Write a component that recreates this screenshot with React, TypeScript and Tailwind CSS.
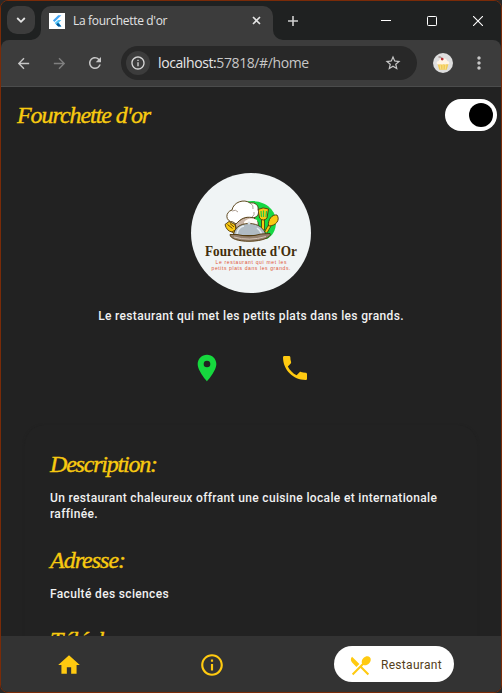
import React from "react";
import {
  MdArrowBack,
  MdArrowForward,
  MdRefresh,
  MdInfoOutline,
  MdStarBorder,
  MdMoreVert,
  MdLocationOn,
  MdPhone,
  MdHome,
  MdRestaurantMenu,
} from "react-icons/md";

function FlutterIcon() {
  return (
    <svg width="16" height="16" viewBox="0 0 16 16" className="block shrink-0">
      <rect width="16" height="16" fill="#fff" />
      <path d="M9.2 2.2h3.2L5.5 9.1 3.9 7.5z" fill="#42a5f5" />
      <path d="M9.2 7.1h3.2L9.9 9.6 12.4 13.4H9.2L5.6 9.9z" fill="#54c5f8" />
      <path d="M7.2 11.5 9 9.8l3.4 3.6H9.2z" fill="#01579b" />
    </svg>
  );
}

function TitleBar() {
  return (
    <div className="flex h-[39px] shrink-0 bg-[#1f2121]">
      <div className="w-[40px] shrink-0 pl-[6px] pt-[5px]">
        <div className="flex h-7 w-7 items-center justify-center rounded-[10px] bg-[#3c3c3c]">
          <svg width="10" height="8" viewBox="0 0 10 8" fill="none" stroke="#e3e3e3" strokeWidth="1.8">
            <path d="M1.2 2 5 5.8 8.8 2" />
          </svg>
        </div>
      </div>
      <div className="relative mt-[5px] flex h-[34px] w-[232px] shrink-0 items-center rounded-t-[10px] bg-[#3c3c3c] pb-[5px] pl-[8px]">
        <svg className="absolute -left-[10px] bottom-0" width="10" height="10">
          <path d="M10 0v10H0A10 10 0 0 0 10 0z" fill="#3c3c3c" />
        </svg>
        <svg className="absolute -right-[10px] bottom-0" width="10" height="10">
          <path d="M0 0v10h10A10 10 0 0 1 0 0z" fill="#3c3c3c" />
        </svg>
        <FlutterIcon />
        <span className="ml-[8px] whitespace-nowrap font-['Open_Sans',sans-serif] text-[12px] leading-4 tracking-[-0.32px] text-[#e3e3e3]">
          La fourchette d'or
        </span>
        <svg className="ml-auto mr-[12px]" width="9" height="9" viewBox="0 0 9 9" stroke="#e3e3e3" strokeWidth="1.6">
          <path d="M1 1l7 7M8 1 1 8" />
        </svg>
      </div>
      <div className="flex flex-1 items-center pl-[15px] pr-[18px]">
        <svg width="10" height="10" viewBox="0 0 10 10" stroke="#d0d0d0" strokeWidth="1.6">
          <path d="M5 0v10M0 5h10" />
        </svg>
        <svg className="ml-auto" width="10" height="10" viewBox="0 0 10 10" stroke="#fff" shapeRendering="crispEdges">
          <path d="M0 4.5h10" />
        </svg>
        <svg className="ml-[36px]" width="10" height="10" viewBox="0 0 10 10" fill="none" stroke="#fff">
          <rect x=".5" y=".5" width="9" height="9" rx=".8" />
        </svg>
        <svg className="ml-[36px]" width="10" height="10" viewBox="0 0 10 10" stroke="#fff" strokeWidth="1.1">
          <path d="M0 0l10 10M10 0 0 10" />
        </svg>
      </div>
    </div>
  );
}

function Cupcake() {
  return (
    <svg width="20" height="20" viewBox="0 0 20 20" className="block">
      <circle cx="10" cy="10" r="10" fill="#dedede" />
      <path d="M4.5 10.5h11l-1.7 6.2H6.2z" fill="#f1ca55" />
      <path d="M7 11l.8 5.5M10 11v5.5M13 11l-.8 5.5" stroke="#fbe69a" strokeWidth=".8" />
      <path d="M3.8 10.8c-.7-1.9.9-3 2-2.8.5-2 2.3-2.9 4.4-2.7 2.3 0 3.7 1 4 2.8 1.6 0 2.5 1.2 2 2.7-1 1.1-2.6.3-3 .1-1 .9-2.3.7-3 .1-1 .9-2.4.6-3.1 0-1 .9-2.8.6-3.3-.2z" fill="#fff4e5" />
      <circle cx="9.2" cy="6.1" r="1.4" fill="#b52e31" />
      <path d="M8.6 4.8Q7.5 3.6 5.5 4" stroke="#663c38" strokeWidth=".7" fill="none" />
    </svg>
  );
}

function Toolbar() {
  return (
    <div className="bg-[#1f2121]">
      <div className="flex h-[47px] items-center rounded-t-[8px] border-b border-[#4b4c4c] bg-[#3c3c3c] pl-[14px] pr-[12px]">
        <MdArrowBack size={17} color="#c7c7c7" />
        <MdArrowForward size={17} color="#7f7f7f" className="ml-[19px]" />
        <MdRefresh size={18} color="#c7c7c7" className="ml-[18px]" />
        <div className="ml-[17px] flex h-[34px] w-[296px] items-center rounded-full bg-[#282828] pl-[5px] pr-[15px]">
          <div className="flex h-6 w-6 items-center justify-center rounded-full bg-[#3c3c3c]">
            <MdInfoOutline size={16} color="#d6d6d6" />
          </div>
          <span className="ml-[8px] whitespace-nowrap font-['Open_Sans',sans-serif] text-[14px] leading-5 tracking-[-0.4px] text-[#c7c7c7]">
            <span className="text-[#e6e6e6]">localhost:</span>57818/#/home
          </span>
          <MdStarBorder size={18} color="#c7c7c7" className="ml-auto" />
        </div>
        <div className="ml-[16px]">
          <Cupcake />
        </div>
        <MdMoreVert size={20} color="#c7c7c7" className="ml-auto" />
      </div>
    </div>
  );
}

function RestaurantLogo() {
  return (
    <svg width="120" height="120" viewBox="0 0 120 120" className="block">
      <circle cx="60" cy="60" r="60" fill="#f0f4f5" />
      <path d="M54 29c17-4 31 6 31 20 0 9-4 14-9 17H60z" fill="#16d844" />
      <g stroke="#4e3609" strokeWidth=".9">
        <path d="M41 57l8 7" strokeWidth="3.500" />
        <path d="M41 57l8 7" stroke="#f9c913" strokeWidth="1.800" />
        <path d="M34 51.500l4-3 6 3 1 5-4 2.500q-5.500-1-7-7.500z" fill="#f9c913" />
        <path d="M36.500 51.500l5 4M39 50.500l4 3.500" />
        <path d="M72 46v11" strokeWidth="3.600" />
        <path d="M72 46v11" stroke="#f9c913" strokeWidth="2" />
        <path d="M67 36.500q5-3 10.500-.5l-1.500 9q-3.500 4-7.500 0z" fill="#f9c913" />
        <path d="M70 38l.5 6M72.500 37.500v6.500M75.500 38l-.5 6" stroke="#24c947" strokeWidth="1.200" />
        <path d="M79 52l-4 7" strokeWidth="3.500" />
        <path d="M79 52l-4 7" stroke="#f9c913" strokeWidth="2" />
        <path d="M77.500 53c-1-6 3.500-12 8.500-11 3.500 5-1 11-8.500 11z" fill="#f9c913" />
        <path d="M44 50q8-6 17-7.500l6 7v8l-20 6z" fill="#c9b5a6" />
        <path d="M53 49q5-6 13-2l1 7-14 4z" fill="#fffaf5" stroke="none" />
        <path d="M42 49c-8-.5-8-10-1-12 1.500-8 12-11.500 18-7 5-1 9 2.500 8 6.500 2 5-2 9-6 8-7-1-11 1-16 6.500z" fill="#fff" />
        <path d="M41 38q4-2 6 1M59 30q4 2 3 6M61 44q3-2 2-5" fill="none" stroke="#897665" strokeWidth=".7" />
        <path d="M42.500 62.500c.5-7 6-12 15.500-12s15.500 5 17 12z" fill="#b0bbc3" />
        <circle cx="58" cy="50" r="1.500" fill="#d9dfe3" stroke="none" />
        <path d="M46 61q1-7 7-8M66 55q4 3 4.500 6" fill="none" stroke="#e6edf1" strokeWidth="1.500" />
        <path d="M39 61.500h7q12 3 24-.5l9-.5c2 3-6 7.500-20 7.800-12 .2-20-2.800-20-6.800z" fill="#94806d" />
        <path d="M43 64q15 4.500 32-.5" fill="none" stroke="#d8cabe" />
      </g>
      <text x="14" y="82.500" textLength="92" lengthAdjust="spacingAndGlyphs" fill="#422d0b" className="font-['Liberation_Serif',serif] text-[14px] font-bold">
        Fourchette d'Or
      </text>
      <g fill="#e05538" className="font-['Liberation_Sans',sans-serif] text-[5px]">
        <text x="24.500" y="90.800" textLength="71" lengthAdjust="spacing">Le restaurant qui met les</text>
        <text x="20.500" y="97" textLength="79" lengthAdjust="spacing">petits plats dans les grands.</text>
      </g>
    </svg>
  );
}

function Section({ title, children, titleClass }: { title: string; children?: React.ReactNode; titleClass: string }) {
  return (
    <section className="mb-[21px]">
      <h2 className={"mb-[8px] whitespace-nowrap font-['Liberation_Serif',serif] text-[24px] italic leading-[35px] text-[#f8ca10] [-webkit-text-stroke:0.4px_#f8ca10] " + titleClass}>
        {title}
      </h2>
      <p className="text-[12px] font-medium leading-4 tracking-[0.345px] text-[#f1f1f1]">{children}</p>
    </section>
  );
}

export default function App() {
  return (
    <div className="h-[693px] w-[502px] bg-[#292929] font-['Roboto',sans-serif]">
      <div className="flex h-full flex-col overflow-hidden rounded-[8px] border border-[#7a2b08] bg-[#222]">
        <TitleBar />
        <Toolbar />
        <main className="min-h-0 flex-1 overflow-hidden">
          <header className="flex h-[56px] items-center justify-between pl-[16px] pr-[4px]">
            <h1 className="whitespace-nowrap font-['Liberation_Serif',serif] text-[24px] italic leading-[34px] tracking-[-1.05px] text-[#f8ca10] [-webkit-text-stroke:0.4px_#f8ca10]">
              Fourchette d'or
            </h1>
            <div className="flex h-8 w-[52px] items-center justify-end rounded-full bg-white pr-1">
              <div className="h-6 w-6 rounded-full bg-black" />
            </div>
          </header>
          <div className="flex flex-col items-center pt-[30px]">
            <RestaurantLogo />
            <p className="mt-[15px] whitespace-nowrap text-[12px] font-medium leading-4 tracking-[0.345px] text-[#f1f1f1]">
              Le restaurant qui met les petits plats dans les grands.
            </p>
            <div className="mt-[28px] flex gap-[56px]">
              <MdLocationOn size={32} color="#16d83e" />
              <MdPhone size={32} color="#ffca10" />
            </div>
          </div>
          <div className="mx-[24px] mt-[41px] h-[400px] rounded-[20px] bg-[#222] px-[25px] pt-[22px] shadow-[0_1px_3px_#202020]">
            <Section title="Description:" titleClass="tracking-[-1.2px]">
              Un restaurant chaleureux offrant une cuisine locale et internationale raffinée.
            </Section>
            <Section title="Adresse:" titleClass="tracking-[-1px]">Faculté des sciences</Section>
            <Section title="Téléphone:" titleClass="tracking-[-1px]" />
          </div>
        </main>
        <nav className="flex h-[56px] shrink-0 items-center bg-[#333] pl-[55px] pr-[47px]">
          <MdHome size={26} color="#ffca10" className="mt-[2px]" />
          <MdInfoOutline size={26} color="#ffca10" className="ml-[117px] mt-[2px]" />
          <div className="ml-auto flex h-[36px] w-[120px] items-center rounded-full bg-white pl-[14px]">
            <MdRestaurantMenu size={25} color="#ffca10" className="mt-[2px]" />
            <span className="ml-[8px] pt-px text-[12px] leading-4 tracking-[0.3px] text-[#54401a]">Restaurant</span>
          </div>
        </nav>
      </div>
    </div>
  );
}
